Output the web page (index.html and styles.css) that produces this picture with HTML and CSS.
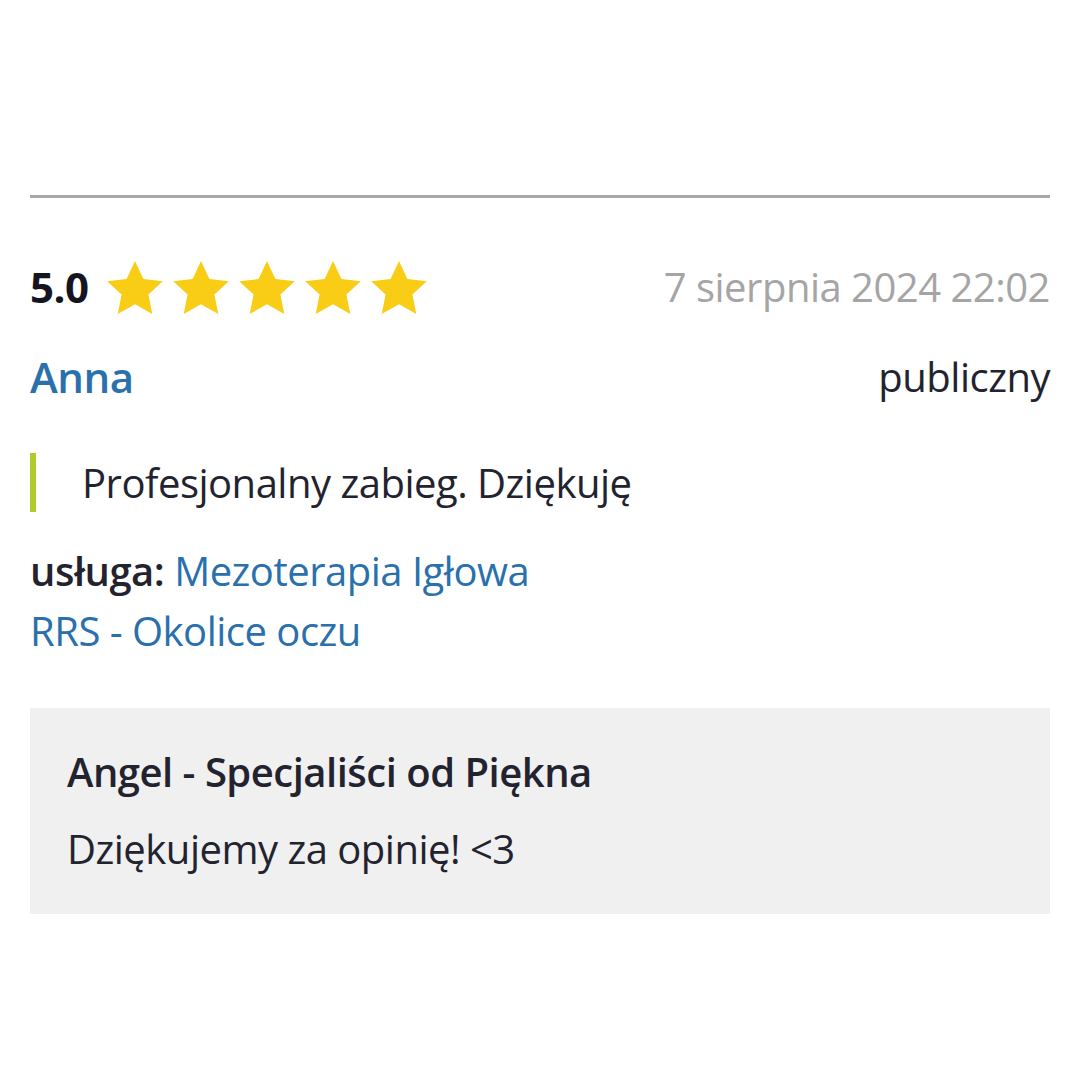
FILE: index.html
```html
<!DOCTYPE html>
<html lang="pl">
<head>
<meta charset="utf-8">
<link rel="stylesheet" href="styles.css">
</head>
<body>
<div class="review">
  <div class="row rating-row">
    <div class="rating">
      <span class="score">5.0</span>
      <span class="stars">
        <svg class="star" viewBox="1.4 1.6 21.2 20.2"><path d="M12 1.6l3.2 6.9 7.4.8-5.5 5.1 1.5 7.4L12 18.1l-6.6 3.7 1.5-7.4L1.4 9.3l7.4-.8z"/></svg>
        <svg class="star" viewBox="1.4 1.6 21.2 20.2"><path d="M12 1.6l3.2 6.9 7.4.8-5.5 5.1 1.5 7.4L12 18.1l-6.6 3.7 1.5-7.4L1.4 9.3l7.4-.8z"/></svg>
        <svg class="star" viewBox="1.4 1.6 21.2 20.2"><path d="M12 1.6l3.2 6.9 7.4.8-5.5 5.1 1.5 7.4L12 18.1l-6.6 3.7 1.5-7.4L1.4 9.3l7.4-.8z"/></svg>
        <svg class="star" viewBox="1.4 1.6 21.2 20.2"><path d="M12 1.6l3.2 6.9 7.4.8-5.5 5.1 1.5 7.4L12 18.1l-6.6 3.7 1.5-7.4L1.4 9.3l7.4-.8z"/></svg>
        <svg class="star" viewBox="1.4 1.6 21.2 20.2"><path d="M12 1.6l3.2 6.9 7.4.8-5.5 5.1 1.5 7.4L12 18.1l-6.6 3.7 1.5-7.4L1.4 9.3l7.4-.8z"/></svg>
      </span>
    </div>
    <span class="date">7 sierpnia 2024 22:02</span>
  </div>
  <div class="row author-row">
    <a class="author">Anna</a>
    <span class="visibility">publiczny</span>
  </div>
  <blockquote class="quote">Profesjonalny zabieg. Dziękuję</blockquote>
  <div class="service">
    <span class="label">usługa:</span> <a class="link">Mezoterapia Igłowa</a><br>
    <a class="link">RRS - Okolice oczu</a>
  </div>
  <div class="reply">
    <div class="reply-title">Angel - Specjaliści od Piękna</div>
    <div class="reply-text">Dziękujemy za opinię! &lt;3</div>
  </div>
</div>
</body>
</html>
```

FILE: styles.css
```css
html, body {
  margin: 0;
  padding: 0;
  background: #fff;
}
body {
  font-family: "Open Sans", "Noto Sans", sans-serif;
  color: #23232f;
  font-size: 40px;
  letter-spacing: -0.5px;
}
.review {
  margin: 195px 30px 0;
  border-top: 3px solid #a8a8a8;
  padding-top: 61px;
}
.row {
  display: flex;
  justify-content: space-between;
  align-items: center;
  height: 56px;
  line-height: 56px;
}
.rating {
  display: flex;
  align-items: center;
  gap: 18px;
}
.score {
  font-weight: 700;
  color: #15151f;
  font-size: 42px;
}
.stars {
  display: flex;
  gap: 10px;
}
.star {
  width: 56px;
  height: 53px;
  fill: #f9cd16;
  display: block;
}
.date {
  color: #a5a5a5;
}
.author-row {
  margin-top: 34px;
}
.author {
  color: #2a70ac;
  font-weight: 600;
  font-size: 42px;
}
.quote {
  margin: 48px 0 0;
  border-left: 6px solid #b3ca2c;
  padding: 0 0 0 46px;
  line-height: 59px;
}
.service {
  margin-top: 29px;
  line-height: 60px;
}
.label {
  font-weight: 600;
}
.link {
  color: #2a70ac;
}
.reply {
  margin-top: 47px;
  background: #f0f0f0;
  padding: 36px 37px 37px;
  line-height: 56px;
}
.reply-title {
  font-weight: 600;
}
.reply-text {
  margin-top: 21px;
}
```
